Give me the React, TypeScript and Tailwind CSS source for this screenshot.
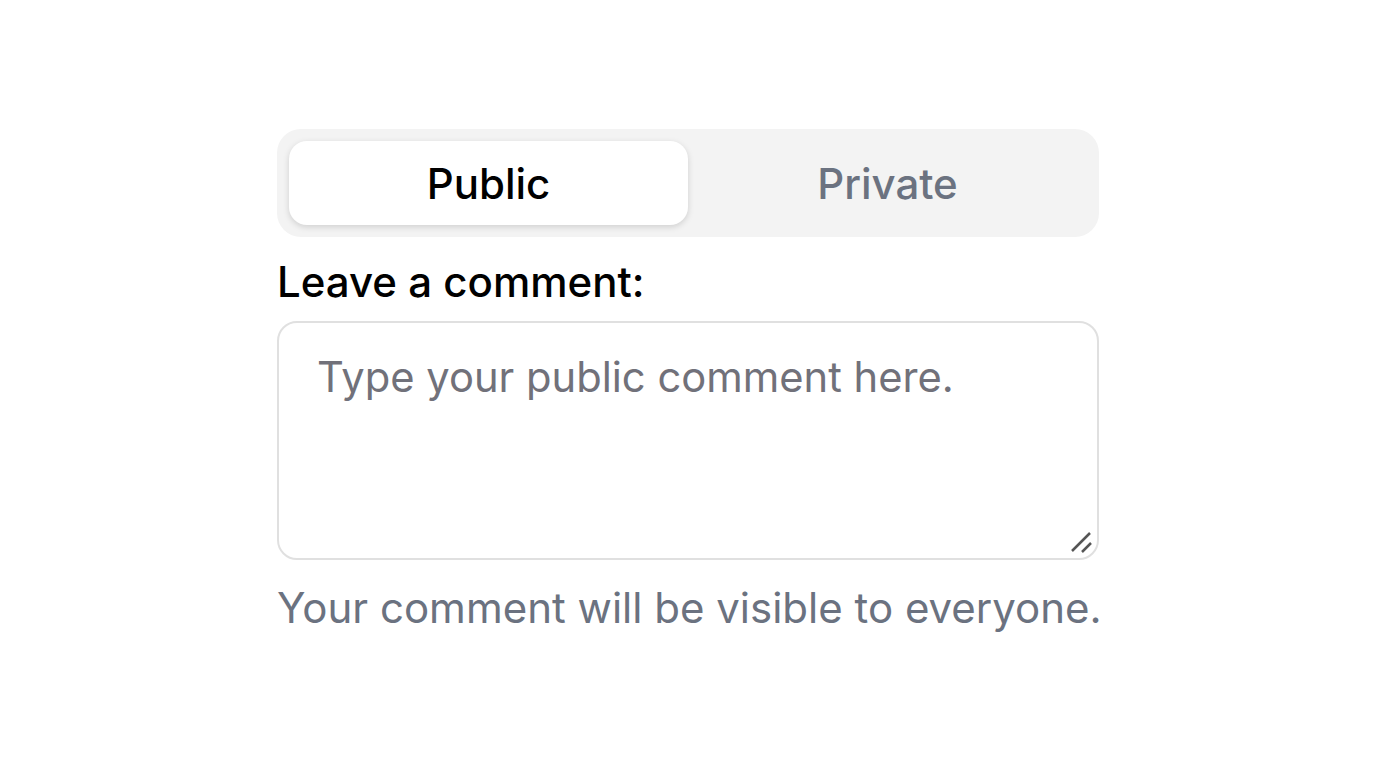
import React, { useState } from 'react'

const App = () => {
  const [tab, setTab] = useState<'public' | 'private'>('public')

  return (
    <div className="min-h-screen bg-white flex justify-center pt-[129px] font-['Inter',sans-serif]">
      <div className="w-[822px] flex flex-col">
        <div className="grid grid-cols-2 bg-[#f3f3f3] rounded-[24px] p-[12px]">
          <button
            onClick={() => setTab('public')}
            className={
              tab === 'public'
                ? 'h-[84px] rounded-[18px] bg-white shadow-[0_2px_6px_rgba(0,0,0,0.15)] text-[42px] font-medium text-black'
                : 'h-[84px] rounded-[18px] text-[42px] font-medium text-[#6b7280]'
            }
          >
            Public
          </button>
          <button
            onClick={() => setTab('private')}
            className={
              tab === 'private'
                ? 'h-[84px] rounded-[18px] bg-white shadow-[0_2px_6px_rgba(0,0,0,0.15)] text-[42px] font-medium text-black'
                : 'h-[84px] rounded-[18px] text-[42px] font-medium text-[#6b7280]'
            }
          >
            Private
          </button>
        </div>

        <label className="mt-[19px] text-[42px] font-medium text-black leading-[52px]">Leave a comment:</label>

        <div className="relative mt-[13px]">
          <textarea
            placeholder={`Type your ${tab} comment here.`}
            className="block w-full h-[239px] resize-none rounded-[20px] border-2 border-[#e0e0e0] px-[38px] py-[26px] text-[41.7px] leading-[56px] text-black placeholder:text-[#71717a] outline-none"
          />
          <svg className="absolute right-[5px] bottom-[5px]" width="24" height="24" viewBox="0 0 24 24">
            <line x1="2" y1="20" x2="20" y2="2" stroke="#555" strokeWidth="2.5" />
            <line x1="12" y1="21" x2="21" y2="12" stroke="#555" strokeWidth="2.5" />
          </svg>
        </div>

        <p className="mt-[20px] whitespace-nowrap text-[42px] leading-[56px] text-[#6b7280]">
          {tab === 'public' ? 'Your comment will be visible to everyone.' : 'Your comment will be visible only to you.'}
        </p>
      </div>
    </div>
  )
}

export default App
